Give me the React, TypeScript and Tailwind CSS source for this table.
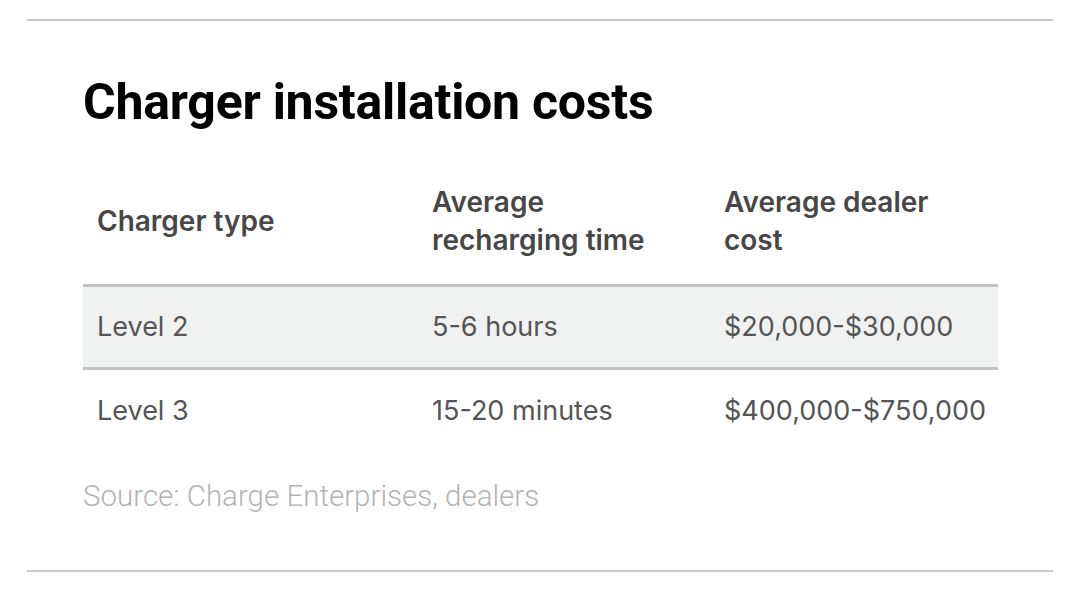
import React from "react";

const rows = [
  ["Level 2", "5-6 hours", "$20,000-$30,000"],
  ["Level 3", "15-20 minutes", "$400,000-$750,000"],
];

export default function App() {
  return (
    <div className="w-[1080px] h-[593px] bg-white overflow-hidden" style={{ fontFamily: 'Inter, "Noto Sans", sans-serif' }}>
      <div className="pt-[19px] px-[27px]">
        <div className="h-[2px] bg-[#c9c9c9]" />
      </div>
      <div className="pl-[83px] pr-[82px]">
        <h1 className="mt-[49px] text-[50px] leading-[64px] font-bold text-black tracking-[-0.25px]" style={{ fontFamily: 'Roboto, "Liberation Sans", sans-serif' }}>
          Charger installation costs
        </h1>
        <div className="mt-[49px] grid grid-cols-[335px_292px_1fr] text-[28px] leading-[38px] font-semibold text-[#474747] pb-[25px]">
          <div className="pl-[14px] self-center">Charger type</div>
          <div className="pl-[14px]">Average<br />recharging time</div>
          <div className="pl-[14px]">Average dealer<br />cost</div>
        </div>
        <div className="border-t-[3px] border-[#c2c2c2]">
          {rows.map((r, i) => (
            <div
              key={i}
              className={`grid grid-cols-[335px_292px_1fr] h-[83px] items-center text-[27px] text-[#555555] ${i === 0 ? "bg-[#f0f2f2] border-b-[3px] border-[#c2c2c2]" : ""}`}
            >
              {r.map((c, j) => (
                <div key={j} className="pl-[14px]">{c}</div>
              ))}
            </div>
          ))}
        </div>
        <div className="mt-[23px] text-[29.5px] leading-[40px] font-light text-[#b3b3b3]" style={{ fontFamily: 'Roboto, sans-serif' }}>Source: Charge Enterprises, dealers</div>
      </div>
      <div className="px-[27px] mt-[54px]">
        <div className="h-[2px] bg-[#c9c9c9]" />
      </div>
    </div>
  );
}
